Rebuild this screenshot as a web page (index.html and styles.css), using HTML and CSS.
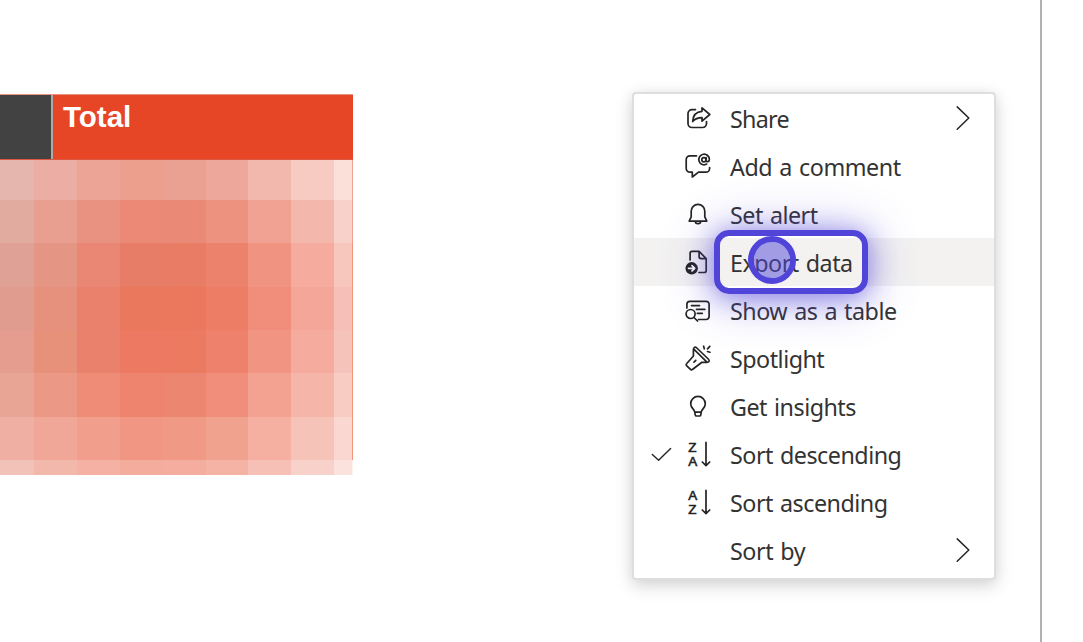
FILE: index.html
```
<!DOCTYPE html>
<html lang="en">
<head>
<meta charset="utf-8">
<title>Report</title>
<link rel="stylesheet" href="styles.css">
</head>
<body>
<main class="report">
  <section class="matrix">
    <header class="matrix-head"><div class="corner"></div><div class="total">Total</div></header>
    <div class="mosaic" id="mosaic"></div>
  </section>
  <nav class="menu">
    <div class="item"><svg class="icon" viewBox="0 0 32 48"><path d="M13.5 15.6H10a4 4 0 0 0-4 4v9.900a4 4 0 0 0 4 4h10.500a4 4 0 0 0 4-4V27.500"/><path d="M20 13.800l7.800 6.700-7.800 6.600v-3.500c-4 0-6.700.8-9.300 3.900.3-6 3.300-9.800 9.300-10.200z"/></svg><span class="label tight">Share</span><svg class="chevron" viewBox="0 0 16 48"><path d="M3.200 12.900L14.800 24 3.200 35.300"/></svg></div>
    <div class="item"><svg class="icon" viewBox="0 0 32 48"><path d="M14.500 13.800H8a3.800 3.800 0 0 0-3.800 3.800v8.800A3.800 3.800 0 0 0 8 30.200h2.300V35l6.200-4.800h7.400a3.700 3.700 0 0 0 3.700-3.700V25.500"/><circle cx="21.900" cy="17.700" r="2.100"/><path d="M24.100 15.500v2.600c0 2.300 3.300 2 3.300-.5a5.300 5.300 0 1 0-2.700 4.500"/></svg><span class="label loose">Add a comment</span></div>
    <div class="item"><svg class="icon" viewBox="0 0 32 48"><path d="M9.200 21.200a6.800 6.800 0 0 1 13.600 0v5.600l2 4.300H7.200l2-4.300zM13.300 31.300a2.700 2.400 0 0 0 5.400 0"/></svg><span class="label">Set alert</span></div>
    <div class="item active"><svg class="icon" viewBox="0 0 32 48"><path d="M8.100 22V15.400a2 2 0 0 1 2-2h7l7.100 7.200v11.900a2 2 0 0 1-2 2H17M17.100 13.400v5.200a2 2 0 0 0 2 2h5.100"/><circle class="solid" cx="9.700" cy="30.300" r="6.200"/><path class="knock" d="M6.500 30.300h6M10 27.700l2.700 2.600L10 32.900"/></svg><span class="label">Export data</span>
      <span class="focus-ring"></span><span class="pointer"></span></div>
    <div class="item"><svg class="icon" viewBox="0 0 32 48"><path d="M4.900 22v-3.700a3 3 0 0 1 3-3h16.200a3 3 0 0 1 3 3v12.200a3 3 0 0 1-3 3H16.500M9.500 19.600h8M14.500 23.400h8.300M15.300 27.300h5M12 31.500l3.500 3.500"/><circle cx="8.600" cy="28" r="4.500"/></svg><span class="label">Show as a table</span></div>
    <div class="item"><svg class="icon" viewBox="0 0 32 48"><path d="M11.400 22V16c0-2.600 1.600-3.700 3.400-2L26.300 25c1.700 1.800.8 3.300-1.500 3.300h-4.900L10.800 35.200c-.9.800-1.800.8-2.600 0l-3.400-3.300c-.8-.8-.8-1.600 0-2.400zM12.300 15.600l12.400 12.300M12 28.200l1.800-1.800M21.600 12.200l.7 2.600M27.800 12.300l-2.300 2.500M25.500 17.500l2.500.7"/></svg><span class="label">Spotlight</span></div>
    <div class="item"><svg class="icon" viewBox="0 0 32 48"><path d="M12.800 30.200c-.4-3-4.100-4.200-4.100-8.500a7.300 7.300 0 0 1 14.600 0c0 4.300-3.700 5.500-4.100 8.500zM12.800 30.200l.4 2.600c.1.800.6 1.200 1.300 1.200h3c.7 0 1.200-.4 1.300-1.200l.4-2.600"/></svg><span class="label">Get insights</span></div>
    <div class="item"><svg class="check" viewBox="0 0 24 48"><path d="M4.300 24.400l6.300 5.900L22.600 18.500"/></svg><svg class="icon" viewBox="0 0 32 48"><text x="10.300" y="22">Z</text><text x="10.800" y="36">A</text><path d="M24 12.300v23M20.300 32l3.700 3.600 3.700-3.600"/></svg><span class="label">Sort descending</span></div>
    <div class="item"><svg class="icon" viewBox="0 0 32 48"><text x="10.800" y="22">A</text><text x="10.300" y="36">Z</text><path d="M24 12.300v23M20.300 32l3.700 3.600 3.700-3.600"/></svg><span class="label">Sort ascending</span></div>
    <div class="item"><span class="icon"></span><span class="label loose">Sort by</span><svg class="chevron" viewBox="0 0 16 48"><path d="M3.200 12.900L14.800 24 3.200 35.300"/></svg></div>
  </nav>
</main>
<script src="app.js"></script>
</body>
</html>
```
FILE: styles.css
```
* { box-sizing: border-box; }
body { margin: 0; background: #fff; overflow: hidden; }
.report {
  display: flex;
  justify-content: space-between;
  align-items: flex-start;
  width: 1042px;
  height: 642px;
  padding: 92px 44px 0 0;
  border-right: 2px solid #b3b0ad;
}
.matrix { width: 353px; margin-top: 2px; }
.matrix-head { display: flex; height: 66px; border-top: 1px solid #e9927f; border-bottom: 1px solid #dd5840; }
.corner { width: 53px; background: #424242; border-right: 2px solid #aaa; }
.total {
  flex: 1;
  padding: 5px 0 0 10px;
  background: #e64626;
  color: #fff;
  font: bold 29.500px/34px "Liberation Sans", Arial, sans-serif;
}
.mosaic {
  display: grid;
  grid-template-columns: 34px 43px 43px 43px 43px 42px 43px 43px 18px 1px;
  grid-template-rows: 40px 43px 44px 43px 43px 44px 43px 15px;
}
.menu {
  width: 364px;
  height: 488px;
  border: 2px solid #dedede;
  border-radius: 4px;
  background: #fff;
  box-shadow: 0 6px 18px rgba(0, 0, 0, .15), 0 1px 14px rgba(0, 0, 0, .06);
}
.item { position: relative; display: flex; height: 48px; padding-left: 48px; }
.active { z-index: 1; }
.active::before { content: ""; position: absolute; inset: 0; background: #f3f2f1; z-index: -1; }
.icon { flex: none; width: 32px; height: 48px; }
svg { fill: none; stroke: #252423; stroke-width: 1.700; stroke-linecap: round; stroke-linejoin: round; }
svg text { fill: #252423; stroke: #252423; stroke-width: .6; font: 13.500px "Liberation Sans", Arial, sans-serif; text-anchor: middle; }
.solid { fill: #252423; stroke: none; }
.knock { stroke: #fff; }
.label {
  margin-left: 16px;
  color: #333;
  font: 23.300px/51px "Noto Sans", "Open Sans", sans-serif;
  letter-spacing: -.5px;
  word-spacing: 1.500px;
  white-space: nowrap;
}
.tight { letter-spacing: -.75px; }
.loose { letter-spacing: -.45px; }
.chevron { width: 16px; height: 48px; margin: 0 24px 0 auto; stroke-width: 1.500; }
.check { width: 24px; height: 48px; margin-left: -34px; margin-right: 10px; stroke-width: 1.400; }
.focus-ring {
  position: absolute;
  left: 80px;
  top: -8px;
  width: 154px;
  height: 64px;
  border: 6px solid #5145d9;
  border-radius: 15px;
  box-shadow: 0 3px 24px rgba(81, 69, 217, .5), 0 3px 50px rgba(81, 69, 217, .45);
}
.pointer {
  position: absolute;
  left: 114px;
  top: -2px;
  width: 48px;
  height: 48px;
  border: 6px solid #5145d9;
  border-radius: 50%;
  background: rgba(81, 69, 217, .5);
  background-clip: padding-box;
}
```
FILE: app.js
```
const rows = [
  "e5b6ad ecaea4 eba495 ed9f8e eaa191 eea89b f2b8ad f7cbc2 fbdfd9 f1a08c",
  "e1ab9f e89f90 e99281 eb8976 ea8a76 ed927f f1a293 f3b7ab f8d1ca f1a08c",
  "dfa196 e59583 e98774 e87d67 e87c64 ed826c f09380 f5ab9d f7c7be f1957f",
  "e09c8e e6907e e9816c ea785d eb785d ed7d65 f08e7b f4a799 f6c0b8 f1957f",
  "e59d8f e7907a e9816c ed7962 ec7a60 ed816c f19481 f5ab9d f6c3ba f1957f",
  "e8a495 ec9887 ee8c78 ee836e ec8670 f18e7b f3a190 f5b5a9 f8cbc3 f1957f",
  "efafa3 f0a797 f19e8c f19683 f09984 f1a28f f5b0a2 f5c3b8 fad7d1 f1957f",
  "f2c1b7 f3b8ac f4b1a4 f4ac9d f4ad9f f5b3a6 f6c0b6 f8d1ca fce2dd fff3f0"
];
const mosaic = document.getElementById("mosaic");
rows.join(" ").split(" ").forEach(color => {
  const cell = document.createElement("div");
  cell.style.background = "#" + color;
  mosaic.append(cell);
});
```
